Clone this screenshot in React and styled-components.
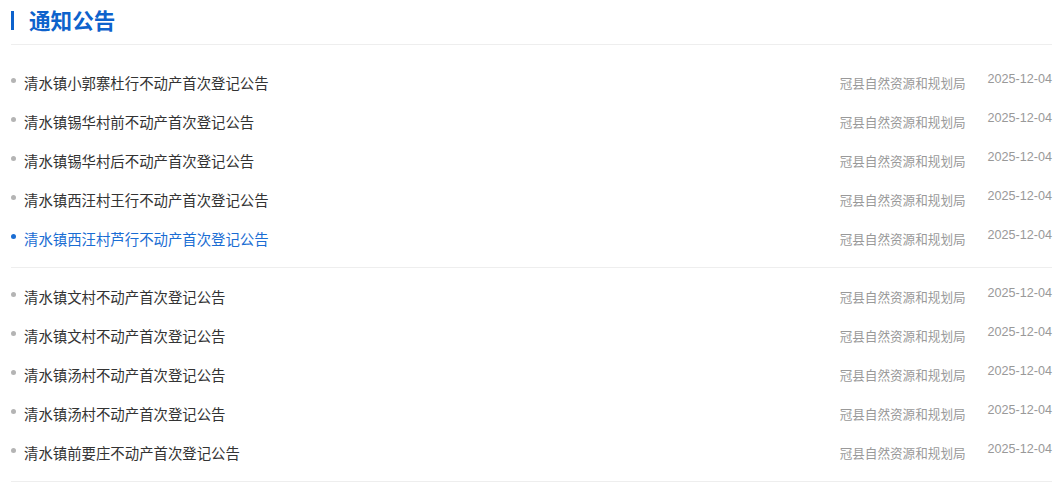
import styled, { createGlobalStyle } from 'styled-components';

const GlobalStyle = createGlobalStyle`
  body {
    margin: 0;
    background: #fff;
    font-family: "Noto Sans CJK SC", "Noto Sans", sans-serif;
  }
`;

const groups = [
  [
    '清水镇小郭寨杜行不动产首次登记公告',
    '清水镇锡华村前不动产首次登记公告',
    '清水镇锡华村后不动产首次登记公告',
    '清水镇西汪村王行不动产首次登记公告',
    '清水镇西汪村芦行不动产首次登记公告',
  ],
  [
    '清水镇文村不动产首次登记公告',
    '清水镇文村不动产首次登记公告',
    '清水镇汤村不动产首次登记公告',
    '清水镇汤村不动产首次登记公告',
    '清水镇前要庄不动产首次登记公告',
  ],
];

export default function App() {
  return (
    <>
      <GlobalStyle />
      <Panel>
        <Header>
          <Bar />
          <Title>通知公告</Title>
        </Header>
        {groups.map((items, gi) => (
          <Group key={gi} first={gi === 0}>
            {items.map((text, i) => {
              const active = gi === 0 && i === 4;
              return (
                <Row key={i}>
                  <Dot active={active} />
                  <Name active={active}>{text}</Name>
                  <Source>冠县自然资源和规划局</Source>
                  <DateText>2025-12-04</DateText>
                </Row>
              );
            })}
          </Group>
        ))}
      </Panel>
    </>
  );
}

const Panel = styled.div`
  padding: 0 11px;
`;

const Header = styled.div`
  display: flex;
  align-items: center;
  height: 40px;
  padding-bottom: 4px;
  border-bottom: 1px solid #eeeeee;
`;

const Bar = styled.span`
  width: 3px;
  height: 19px;
  background: #0d62cc;
`;

const Title = styled.h2`
  margin: 0 0 0 15px;
  font-size: 21.6px;
  font-weight: 700;
  color: #0d62cc;
  line-height: 1;
`;

const Group = styled.ul`
  list-style: none;
  margin: ${(p) => (p.first ? '9px' : '0')} 0 0;
  padding: 9px 0 9px;
  border-bottom: 1px solid #eeeeee;
`;

const Row = styled.li`
  display: flex;
  align-items: center;
  height: 39px;
`;

const Dot = styled.span`
  width: 5px;
  height: 5px;
  border-radius: 50%;
  margin-top: -5px;
  background: ${(p) => (p.active ? '#1a6dd3' : '#b4b4b4')};
  flex-shrink: 0;
`;

const Name = styled.span`
  flex: 1;
  margin-left: 8px;
  font-size: 14.4px;
  color: ${(p) => (p.active ? '#1a6dd3' : '#333333')};
  white-space: nowrap;
`;

const Source = styled.span`
  font-size: 12.6px;
  color: #999999;
  white-space: nowrap;
`;

const DateText = styled.span`
  align-self: flex-start;
  margin-left: 22px;
  padding-top: 9px;
  line-height: 14px;
  font-family: "Liberation Sans", Arial, sans-serif;
  font-size: 12.6px;
  color: #999999;
`;
